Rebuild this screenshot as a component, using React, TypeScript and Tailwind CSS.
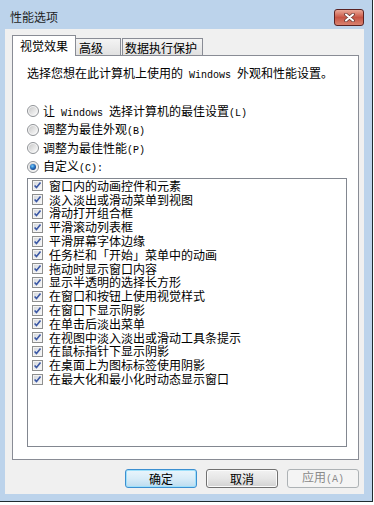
import React from 'react';

const cjk = "font-['Noto_Sans_CJK_SC',sans-serif]";
const latin = "font-['Liberation_Mono','Noto_Sans_CJK_SC',monospace] text-[10px]";

const effects = [
  '窗口内的动画控件和元素',
  '淡入淡出或滑动菜单到视图',
  '滑动打开组合框',
  '平滑滚动列表框',
  '平滑屏幕字体边缘',
  '任务栏和「开始」菜单中的动画',
  '拖动时显示窗口内容',
  '显示半透明的选择长方形',
  '在窗口和按钮上使用视觉样式',
  '在窗口下显示阴影',
  '在单击后淡出菜单',
  '在视图中淡入淡出或滑动工具条提示',
  '在鼠标指针下显示阴影',
  '在桌面上为图标标签使用阴影',
  '在最大化和最小化时动态显示窗口',
];

const L: React.FC<{ children: React.ReactNode }> = ({ children }) => (
  <span className={`${latin} whitespace-pre`}>{children}</span>
);

const Radio: React.FC<{ checked?: boolean }> = ({ checked }) => (
  <svg width="12" height="12" viewBox="0 0 12 12" className="shrink-0">
    <defs>
      <linearGradient id="radioIn" x1="0" y1="0" x2="1" y2="1">
        <stop offset="0" stopColor="#c9c9c9" />
        <stop offset="1" stopColor="#fbfbfb" />
      </linearGradient>
      <radialGradient id="radioDot" cx="0.4" cy="0.35" r="0.7">
        <stop offset="0" stopColor="#7fd0f7" />
        <stop offset="0.5" stopColor="#2a78c8" />
        <stop offset="1" stopColor="#163d7a" />
      </radialGradient>
    </defs>
    <circle cx="6" cy="6" r="5.5" fill="#f6f6f6" stroke="#8f9296" />
    <circle cx="6" cy="6" r="4" fill="url(#radioIn)" />
    {checked && <circle cx="6" cy="6" r="3" fill="url(#radioDot)" />}
  </svg>
);

const Check: React.FC = () => (
  <svg width="11" height="11" viewBox="0 0 11 11" className="shrink-0">
    <defs>
      <linearGradient id="chkIn" x1="0" y1="0" x2="1" y2="1">
        <stop offset="0" stopColor="#d6d9de" />
        <stop offset="1" stopColor="#f7f7f7" />
      </linearGradient>
    </defs>
    <rect x="0.5" y="0.5" width="10" height="10" fill="#f4f4f4" stroke="#8e8f8f" />
    <rect x="2" y="2" width="7" height="7" fill="url(#chkIn)" />
    <path d="M2.6 5.4 L4.5 7.6 L8.5 2.6" fill="none" stroke="#3b58a5" strokeWidth="1.6" />
  </svg>
);

export default function App() {
  return (
    <div className={`w-[374px] h-[505px] bg-white text-[12px] text-black ${cjk}`}>
      <div className="w-[373px] h-[502px] bg-[#bcd3eb] border-r border-b border-[#1f2a30] flex flex-col">
        {/* title bar */}
        <div className="h-[29px] shrink-0 flex items-center justify-between pl-[10px] pr-[8px] pt-[5px]">
          <span className="leading-[12px] text-[#1e1e1e]">性能选项</span>
          <div className="w-[30px] h-[17px] rounded-[3px] border border-[#5a2222] bg-linear-to-b from-[#eaa898] via-[#c65444] to-[#d98270] flex items-center justify-center">
            <svg width="13" height="9" viewBox="0 0 13 9">
              <path d="M3 1.5 L10 7.5 M10 1.5 L3 7.5" stroke="#6b3b36" strokeWidth="3.6" strokeLinecap="round" />
              <path d="M3 1.5 L10 7.5 M10 1.5 L3 7.5" stroke="#ffffff" strokeWidth="2" strokeLinecap="round" />
            </svg>
          </div>
        </div>

        {/* client area */}
        <div className="ml-[5px] mr-[8px] h-[465px] shrink-0 bg-[#f0f0f0] pl-[7px] pr-[5px] pt-[6px] flex flex-col">
          {/* tabs */}
          <div className="h-[20px] flex items-end relative z-10">
            <div className="w-[64px] h-[21px] -mb-[1px] bg-white border border-b-0 border-[#898c95] flex items-center justify-center leading-[12px] pb-[1px]">
              视觉效果
            </div>
            <div className="w-[45px] h-[17px] bg-linear-to-b from-[#f4f4f4] to-[#e1e1e1] border border-l-0 border-b-0 border-[#898c95] flex items-center pl-[3px] leading-[12px] pt-[1px]">
              高级
            </div>
            <div className="ml-[1px] w-[81px] h-[17px] bg-linear-to-b from-[#f4f4f4] to-[#e1e1e1] border border-b-0 border-[#898c95] flex items-center pl-[2px] leading-[12px] pt-[1px]">
              数据执行保护
            </div>
          </div>

          {/* tab page */}
          <div className="h-[405px] bg-white border border-[#898c95] pl-[14px] pt-[10px] flex flex-col">
            <div className="h-[13px] leading-[13px] whitespace-nowrap">
              选择您想在此计算机上使用的<L> Windows </L>外观和性能设置。
            </div>

            <div className="mt-[23px] flex flex-col">
              <div className="h-[18.5px] flex items-center gap-[4px] whitespace-nowrap">
                <Radio />
                <span>
                  让<L> Windows </L>选择计算机的最佳设置<L>(L)</L>
                </span>
              </div>
              <div className="h-[18.5px] flex items-center gap-[4px] whitespace-nowrap">
                <Radio />
                <span>
                  调整为最佳外观<L>(B)</L>
                </span>
              </div>
              <div className="h-[18.5px] flex items-center gap-[4px] whitespace-nowrap">
                <Radio />
                <span>
                  调整为最佳性能<L>(P)</L>
                </span>
              </div>
              <div className="h-[18.5px] flex items-center gap-[4px] whitespace-nowrap">
                <Radio checked />
                <span>
                  自定义<L>(C):</L>
                </span>
              </div>
            </div>

            <div className="mt-[2px] w-[320px] h-[269px] border border-[#828790] bg-white overflow-hidden">
              {effects.map((t) => (
                <div key={t} className="h-[13.8px] flex items-center pl-[4px] gap-[6px] whitespace-nowrap">
                  <Check />
                  <span className="leading-[12px]">{t}</span>
                </div>
              ))}
            </div>
          </div>

          {/* buttons */}
          <div className="mt-[9px] flex justify-end gap-[9px]">
            <button className="w-[72px] h-[19px] rounded-[3px] border border-[#3c8fd0] shadow-[inset_0_0_0_1px_#9de0fb] bg-linear-to-b from-[#eaf5fc] via-[#d8ecf8] to-[#bcdcef] leading-[12px]">
              确定
            </button>
            <button className="w-[72px] h-[19px] rounded-[3px] border border-[#707070] shadow-[inset_0_0_0_1px_#fbfbfb] bg-linear-to-b from-[#f2f2f2] via-[#e6e6e6] to-[#d2d2d2] leading-[12px]">
              取消
            </button>
            <button className="w-[72px] h-[19px] rounded-[3px] border border-[#adb2b5] bg-[#f4f4f4] text-[#8a8a8a] leading-[12px]">
              应用<L>(A)</L>
            </button>
          </div>
        </div>
      </div>
    </div>
  );
}
